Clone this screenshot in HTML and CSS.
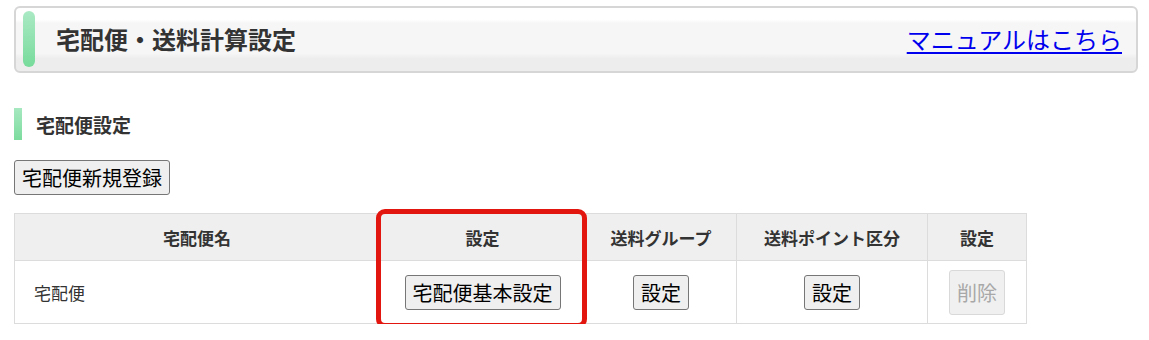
FILE: index.html
```html
<!DOCTYPE html>
<html lang="ja">
<head>
<meta charset="utf-8">
<title>宅配便・送料計算設定</title>
<link rel="stylesheet" href="styles.css">
</head>
<body>
<div class="page">
  <header class="title-box">
    <span class="title-bar"></span>
    <h1 class="title">宅配便・送料計算設定</h1>
    <a class="manual" href="#">マニュアルはこちら</a>
  </header>

  <h2 class="section"><span class="section-bar"></span><span class="section-text">宅配便設定</span></h2>

  <div class="actions">
    <button class="btn" type="button">宅配便新規登録</button>
  </div>

  <div class="table-wrap">
    <table class="grid">
      <colgroup>
        <col class="c1"><col class="c2"><col class="c3"><col class="c4"><col class="c5">
      </colgroup>
      <thead>
        <tr>
          <th>宅配便名</th>
          <th>設定</th>
          <th>送料グループ</th>
          <th>送料ポイント区分</th>
          <th>設定</th>
        </tr>
      </thead>
      <tbody>
        <tr>
          <td class="name">宅配便</td>
          <td class="center"><button class="btn" type="button">宅配便基本設定</button></td>
          <td class="center"><button class="btn" type="button">設定</button></td>
          <td class="center"><button class="btn" type="button">設定</button></td>
          <td class="center"><button class="btn btn-disabled" type="button" disabled>削除</button></td>
        </tr>
      </tbody>
    </table>
    <div class="highlight"></div>
  </div>
</div>
</body>
</html>
```

FILE: styles.css
```css
* { box-sizing: border-box; }

html, body {
  margin: 0;
  padding: 0;
  background: #fff;
}

body {
  font-family: "Noto Sans CJK JP", "Noto Sans", sans-serif;
  color: #333;
}

.page {
  padding: 6px 11px 0 14px;
}

.title-box {
  display: flex;
  align-items: center;
  height: 67px;
  padding: 2px 14px 3px 7px;
  border: 2px solid #d6d6d6;
  border-radius: 6px;
  background: linear-gradient(to bottom, #ffffff 0%, #ffffff 18%, #f6f6f6 24%, #f6f6f6 72%, #ededed 80%, #ededed 100%);
}

.title-bar {
  width: 12px;
  height: 56px;
  border-radius: 6px;
  background: linear-gradient(to bottom, #aae9c4, #77db9b);
  flex: none;
}

.title {
  margin: 0 0 0 21px;
  font-size: 24px;
  font-weight: bold;
  line-height: 32px;
  color: #333;
  flex: 1;
}

.manual {
  font-size: 24px;
  line-height: 32px;
  color: #0000ee;
  text-decoration: underline;
  text-underline-offset: 3px;
}

.section {
  display: flex;
  align-items: center;
  margin: 35px 0 0 0;
  height: 32px;
  font-size: 19px;
  font-weight: bold;
  color: #333;
}

.section-bar {
  width: 8px;
  height: 32px;
  background: linear-gradient(to bottom, #a6e8c0, #7cdc9e);
  flex: none;
}

.section-text {
  margin-left: 14px;
}

.actions {
  margin-top: 20px;
}

.btn {
  font-family: "Noto Sans CJK JP", "Noto Sans", sans-serif;
  font-size: 20px;
  line-height: 27px;
  padding: 3px 7px;
  color: #000;
  background: #efefef;
  border: 1px solid #767676;
  border-radius: 3px;
}

.btn-disabled {
  color: #a8a8a8;
  border-color: #d9d9d9;
  background: #f0f0f0;
  padding: 8px 7px;
}

.table-wrap {
  position: relative;
  margin-top: 18px;
  width: 1012px;
}

.grid {
  width: 1012px;
  table-layout: fixed;
  border-collapse: collapse;
}

.c1 { width: 365px; }
.c2 { width: 206px; }
.c3 { width: 151px; }
.c4 { width: 191px; }
.c5 { width: 99px; }

.grid th,
.grid td {
  border: 1px solid #dcdcdc;
  padding: 0;
}

.grid th {
  height: 47px;
  background: #efefef;
  font-size: 17px;
  font-weight: bold;
  color: #333;
  text-align: center;
}

.grid td {
  height: 63px;
  font-size: 17px;
  color: #333;
}

.grid td.name {
  padding-left: 19px;
}

.grid td.center {
  text-align: center;
}

.highlight {
  position: absolute;
  left: 362px;
  top: -4px;
  width: 211px;
  height: 119px;
  border: 5px solid #e3160f;
  border-radius: 9px;
  pointer-events: none;
}
```
